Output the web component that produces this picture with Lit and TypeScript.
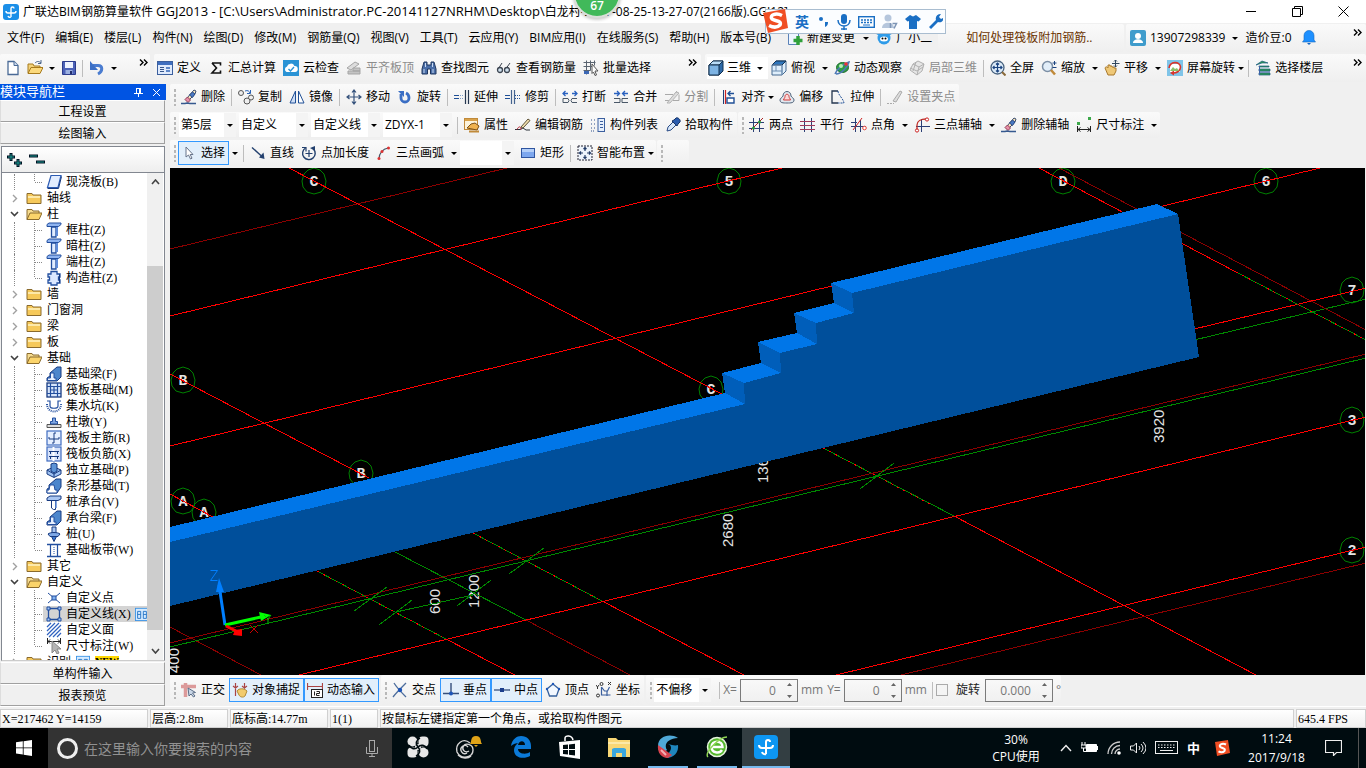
import { LitElement, html, svg, css, nothing } from "lit";
import { customElement } from "lit/decorators.js";
import { classMap } from "lit/directives/class-map.js";

const B = "#1f4f96";

/* 16x16 toolbar glyphs */
const ICONS: Record<string, unknown> = {
  app: svg`<rect width="16" height="16" rx="3" fill="#1b8fe8"/><path d="M8 13V4.500a1.500 1.500 0 0 1 3 0M8 13a2 2 0 0 1-3-1M3 7a2 2 0 0 0 2 2h6a2 2 0 0 0 2-2" fill="none" stroke="#fff" stroke-width="1.400"/>`,
  file: svg`<path d="M3 1.500h6l4 4v9H3z" fill="#fff" stroke="#4a6a96" stroke-width="1.300"/><path d="M9 1.500v4h4" fill="#cfdcf0" stroke="#4a6a96"/>`,
  open: svg`<path d="M1 13V4h5l1 2h6v2" fill="#f3d27a" stroke="#a77a1c"/><path d="M1 13.500 4 7.500h12l-3 6z" fill="#fbd97c" stroke="#a77a1c"/><path d="M8 3c2-2 4-2 6 0M14 0v3.500h-3" fill="none" stroke="#49648a"/>`,
  save: svg`<path d="M1.500 1.500h13v13h-13z" fill="#4c62b8" stroke="#2c3c8c"/><path d="M4 2h8v6H4z" fill="#eef3ff"/><path d="M4.500 10h7v4h-7z" fill="#9bb0e0"/><path d="M9 11h2v3H9z" fill="#24306e"/>`,
  undo: svg`<path d="M4 5.500h5c5 0 5 6 0 8.500" fill="none" stroke="#4a7cd0" stroke-width="3"/><path d="M1 1v9h8z" fill="#3c6fc6"/>`,
  define: svg`<rect x=".5" y="1.500" width="15" height="13" fill="#dfeafc" stroke="#3b5f9e"/><path d="M1 2h14v3H1z" fill="#3f6fc0"/><path d="M3 7.500h4M3 9.500h4M3 11.500h4" stroke="#35568c"/><path d="M9 7h4v2H9zM9 10h4v2H9z" fill="#5d86c8"/>`,
  sigma: svg`<path d="M4 3h8.500v2.500M12.500 10.500V13H4l4.500-5L4 3" fill="none" stroke="#111" stroke-width="1.600"/>`,
  cloud: svg`<rect width="16" height="16" fill="#2a93d5"/><path d="M3.500 12a3 3 0 0 1 .5-5.500A4 4 0 0 1 11.500 6a3 3 0 0 1 .5 6z" fill="#fff"/><path d="m5.500 9 2 2 3.500-4" stroke="#2a93d5" fill="none" stroke-width="1.400"/>`,
  aligntop: svg`<path d="m1 8 8-6 4 2-8 6z" fill="#ddd" stroke="#a5a5a5"/><path d="M2 11h12v3H2zM7 8h7v3H7z" fill="#c4c4c4" stroke="#a5a5a5"/>`,
  binoc: svg`<path d="M3 2h3v3h4V2h3l2 7v5H9.500V9h-3v5H1V9z" fill="#4a6ea8" stroke="#1f365f"/><path d="M3 9v4M12 9v4M4.500 3v4M11.500 3v4" stroke="#c9daf2"/>`,
  glasses: svg`<path d="M1.500 10 6 3M9 10l5-7" stroke="#3c4450" fill="none"/><circle cx="4" cy="10" r="2.500" fill="#cfe0ee" stroke="#3c4450" stroke-width="1.300"/><circle cx="11" cy="10" r="2.500" fill="#cfe0ee" stroke="#3c4450" stroke-width="1.300"/>`,
  batch: svg`<path d="M.5 2.500h12M.5 6.500h9M3.500.5v14M7.500.5v10M11.500.5v5M.5 10.500h7" stroke="#5a6470" fill="none"/><path d="M1 11h5v3H1z" fill="#3c67b4"/><path d="m9 4 6 7h-3l1.500 4-1.500.5L10.500 12 9 13.500z" fill="#fff" stroke="#555"/>`,
  cube: svg`<path d="m1 5 4-4h10v10l-4 4H1z" fill="#2f6aa8" stroke="#12304f"/><path d="m1 5 4-4h10l-4 4z" fill="#b9dcf7" stroke="#12304f"/><path d="M1 5h10v10H1z" fill="#7db3e3" stroke="#12304f"/>`,
  cubetop: svg`<path d="m1 5 4-4h10v10l-4 4H1z" fill="#dfeefb" stroke="#44688f"/><path d="m1 5 4-4h10l-4 4z" fill="#2f76bd" stroke="#12304f"/><path d="M1 5h10v10M11 5v10M5 5v6H1m4 0h6" fill="none" stroke="#6c8db1"/>`,
  orbit: svg`<ellipse cx="8.500" cy="7.500" rx="6" ry="5" fill="#2f9e44" stroke="#1b6b2b"/><path d="M1 14C3 9 9 4 15 2c-1 5-8 12-13 12" fill="none" stroke="#4d79b5" stroke-width="1.500"/><circle cx="12" cy="4" r="1.800" fill="#e33"/><circle cx="7" cy="6" r="2" fill="#b8f0b0"/>`,
  part3d: svg`<path d="m1 10 3-6 5-3 6 3-2 7-5 4z" fill="#e6e6e6" stroke="#b0b0b0"/><path d="m4 4 6 3 5-3M10 7l-2 8M1 8l7 3 6-4M7 2l-3 9" fill="none" stroke="#b0b0b0"/>`,
  full: svg`<circle cx="7.500" cy="7.500" r="6.500" fill="#dcebf8" stroke="#47617e" stroke-width="1.300"/><path d="m12 12 3.500 3.500" stroke="#8a6a3a" stroke-width="2"/><path d="M7.500 3v9M3 7.500h9M6 4.500 7.500 3 9 4.500M6 10.500 7.500 12 9 10.500M4.500 6 3 7.500 4.500 9M10.500 6 12 7.500 10.500 9" stroke="#1c4480" fill="none" stroke-width="1.200"/>`,
  zoom: svg`<circle cx="6.500" cy="6.500" r="5" fill="#e2eef9" stroke="#7c8fa5" stroke-width="1.500"/><path d="m10 10 4 4.500" stroke="#c08a3a" stroke-width="2.500"/><path d="M13.500 1v4M11.500 3h4M11.500 7.500h4" stroke="#1c4480"/>`,
  pan: svg`<path d="M1 8c1-2 2-1 3 0V5h2v1h2v1h2v1h2v3l-2 4H4z" fill="#efc877" stroke="#a9792c"/><path d="M11.500 0v7M8 3.500h7.500" stroke="#31475e"/><path d="m10 1.500 1.500-1.500L13 1.500M10 5.500 11.500 7 13 5.500" stroke="#31475e" fill="none"/>`,
  rotscr: svg`<rect width="16" height="16" fill="#7fc4e8"/><rect x="3" y="4" width="10" height="8" fill="#fff"/><path d="M2 8C3 1 13 1 13.500 7c0 4-4 6-7 6" fill="none" stroke="#d9342b" stroke-width="1.600"/><path d="m3 13 4-2.500v5z" fill="#d9342b"/><path d="m3 11 3-4 2 2 2-1 2 3z" fill="#8bc06a"/>`,
  floors: svg`<path d="m1 5 6-4 6 2H7zM4 6h10v1H4zM4 9h11v2H4zM4 13h11v2H4z" fill="#2d9b52" stroke="#1c5c80" stroke-width=".7"/><path d="M4.500 6v9M4 12h11" stroke="#3a63a6"/>`,
  erase: svg`<path d="m6 9 7-8 2 1-1 3-6 6z" fill="#fbe9c0" stroke="#3c4e6e"/><path d="m8.500 6 3 2.500L14 5l-2.500-2z" fill="#4a79c4" stroke="#2c4a80"/><path d="m4 10.500 3 3 2.500-2.500-3-3z" fill="#e88fa8" stroke="#8c3a50"/><path d="M0 14.500h4l2-.5 3 .5h6" stroke="#35598f" fill="none" stroke-width="1.600"/>`,
  copy: svg`<circle cx="3" cy="4" r="2.500" fill="#eee" stroke="#555"/><circle cx="9" cy="12" r="3" fill="#eee" stroke="#555"/><circle cx="13" cy="8.500" r="2.500" fill="#eee" stroke="#555"/><path d="M7 2c3-1 4 0 5 2M12.500 1v3.500H9" fill="none" stroke="#2b63b5"/>`,
  mirror: svg`<path d="M6.500 2v12H1z" fill="#cfdef5" stroke="${B}"/><path d="M9.500 2v12H15z" fill="#fff" stroke="${B}"/>`,
  move: svg`<path d="M8 1v14M1 8h14M6 3.500 8 1l2 2.500M6 12.500 8 15l2-2.500M3.500 6 1 8l2.500 2M12.500 6 15 8l-2.500 2" fill="none" stroke="#35527c" stroke-width="1.200"/>`,
  rotate: svg`<path d="M4 5v4a4 4 0 0 0 8 0c0-2-1-4-3-5" fill="none" stroke="#3a6ec4" stroke-width="2.800"/><path d="M1 2h6v6z" fill="#3a6ec4"/>`,
  extend: svg`<path d="M0 6.500h5M0 9.500h5" stroke="${B}" stroke-width="1.200"/><path d="M6 6.500h4M6 9.500h4" stroke="#7d9cc8" stroke-dasharray="1 1"/><path d="M11.500 1v14M14.500 1v14" stroke="#24364f" stroke-width="1.200"/>`,
  trim: svg`<path d="M0 6.500h5M0 9.500h5" stroke="${B}" stroke-width="1.200"/><path d="M6.500 1v14M9.500 1v14" stroke="#44638f" stroke-width="1.200"/><path d="M10 6.500h5M10 9.500h5" stroke="${B}" stroke-dasharray="1 1"/>`,
  brk: svg`<path d="M1 4.500h5M10 4.500h5M3.500 2 1 4.500 3.500 7M12.500 2 15 4.500 12.500 7" fill="none" stroke="#2a62c0" stroke-width="1.300"/><path d="M1 9.500h5l1 2-1 2H1zM15 9.500h-5l-1 2 1 2h5" fill="none" stroke="#4a5868"/>`,
  join: svg`<path d="M1 4.500h5M10 4.500h5M4 2l2.500 2.500L4 7M12 2 9.500 4.500 12 7" fill="none" stroke="#2a62c0" stroke-width="1.300"/><path d="M1 9.500h6v4H1M15 9.500H9v4h6" fill="none" stroke="#4a5868"/>`,
  split: svg`<path d="M1 5.500h8M1 11.500h6M9 11.500h6v-6M4 14l9-12" fill="none" stroke="#a9a9a9"/><path d="m3 14 9-11 3 1-9 10z" fill="#ddd" stroke="#b4b4b4"/>`,
  align: svg`<path d="M4.500 1v14" stroke="#c22" stroke-width="1.200"/><path d="M2.500 1v14" stroke="#1f3f78"/><path d="M6 9h7v5H6z" fill="#fff" stroke="${B}" stroke-width="1.400"/><path d="M13 4.500H7M9.500 2 7 4.500 9.500 7" fill="none" stroke="${B}" stroke-width="1.400"/>`,
  offset: svg`<path d="M1 11c0-2 2-2 3-4 0-6 8-6 8 0 1 2 3 2 3 4 0 3-3 3-7 3s-7 0-7-3z" fill="#e2e8ef" stroke="#50647c"/><path d="M4.500 11C5 9 6 9 6 7.500c0-3 4-3 4 0C10 9 11 9 11.500 11z" fill="#fbd8d8" stroke="#d03a3a"/>`,
  stretch: svg`<path d="M8 2H2v12h6" fill="none" stroke="#24364f" stroke-width="1.300"/><path d="M8 2c0 4 5 7 6 12H8" fill="none" stroke="${B}" stroke-dasharray="2 1"/>`,
  grip: svg`<path d="M0 14.500h7" stroke="#aaa" stroke-dasharray="2 1"/><path d="m6 12 7-10 2 1-6 10z" fill="#ddd" stroke="#aaa"/>`,
  prop: svg`<rect x=".5" y="1.500" width="13" height="11" fill="#fdf4dc" stroke="#c08a3a"/><path d="M1 2h12v2H1z" fill="#d9a24a"/><path d="m3 11 4-4 4-1 4 3-2 4-5-1z" fill="#f0b24e" stroke="#7c5217"/><path d="M5 14.500h10" stroke="#c08a3a" stroke-width="2"/>`,
  edit: svg`<path d="M0 12.500h5l3-1.500 3 2h4" stroke="#2a3038" fill="none"/><path d="m6 10 7-8 2 1.500L8 11z" fill="#f2dfae" stroke="#5d5238"/><path d="M2 12.500c2-4 4-3 4 0" stroke="#b23" fill="none"/>`,
  list: svg`<path d="M1 3h2M1 7h2M1 11h2M4 3h2M4 7h2M4 11h2M1 14h4" stroke="#2d4f8b" stroke-dasharray="1 1"/><rect x="8" y="1.500" width="6.500" height="13" fill="#e6effc" stroke="#3b5f9e"/><path d="M10 4.500h3M10 7.500h3M10 10.500h3" stroke="#3b5f9e"/>`,
  pick: svg`<path d="m2 14 1-4 5-5 3 3-5 5z" fill="#d8e8fa" stroke="#2a4b86"/><path d="m7 4 5 5 1-2 2-2c1-2-2-5-4-4L9 3z" fill="#2a5cae" stroke="#173466"/>`,
  ax2: svg`<path d="M4.500 1v14M10.500 1v14M0 5.500h15M0 11.500h15" stroke="#2b3f75"/><path d="m2 13 12-12" stroke="#a22"/><circle cx="10.500" cy="5" r="1.500" fill="#2a9b3c"/><circle cx="4.500" cy="11" r="1.500" fill="#2a9b3c"/>`,
  axp: svg`<path d="M4.500 1v14M11.500 1v14" stroke="#2b3f75"/><path d="M0 4.500h15M0 8.500h15M0 12.500h15" stroke="#a13a5a"/>`,
  axa: svg`<path d="M4.500 1v14M0 9.500h15M9.500 3v12M0 5.500h6" stroke="#2b3f75"/><path d="m2 13 9-12" stroke="#c22"/><circle cx="13.500" cy="11" r="1.800" fill="#fff" stroke="#e8463c"/>`,
  ax3: svg`<path d="M7.500 2v13M2 9.500h14" stroke="#2b3f75"/><path d="M3 14V8c0-4 4-6 9-6" fill="none" stroke="#c2302a" stroke-width="1.300"/><circle cx="3" cy="13.500" r="1.600" fill="#fff" stroke="#c22"/><circle cx="13" cy="2.500" r="1.600" fill="#fff" stroke="#c22"/>`,
  dim: svg`<path d="M1.500 9v6M14.500 9v6M2 12.500h12M4.500 10.500 2 12.500l2.500 2M11.500 10.500l2.500 2-2.500 2" stroke="#222" fill="none"/><path d="M1 5h3v3H1zM12 0h3v3h-3z" fill="#3ca84a"/>`,
  cursor: svg`<path d="M5 2v10l2.500-2 2 4 1.500-.800L9.200 9.500H12z" fill="#fff" stroke="#66738a"/>`,
  line: svg`<path d="M2 2.500 12 11.500" stroke="#23406e" stroke-width="1.400"/><path d="M14.500 14 9 12.500l4.500-5z" fill="#23406e"/>`,
  ptlen: svg`<path d="M4.500 3a6.300 6.300 0 1 0 8 1" fill="none" stroke="#23406e" stroke-width="1.400"/><path d="M8 5v7M4.500 8.500h7M1 2.500h4v4" fill="none" stroke="#23406e" stroke-width="1.200"/><path d="m9 3 5-2v5z" fill="#23406e"/>`,
  arc3: svg`<path d="M3 14C3 8 7 4 12 3" fill="none" stroke="#4a5868" stroke-width="1.200"/><circle cx="3" cy="13.500" r="1.500" fill="#d33"/><circle cx="6" cy="6.500" r="1.500" fill="#d33"/><circle cx="12.500" cy="3" r="1.500" fill="#d33"/>`,
  rect: svg`<rect x="1.500" y="3.500" width="13" height="9" fill="#7da7ee" stroke="#2f55a0"/><path d="M2 4h12v3H2z" fill="#b4cff8"/>`,
  smart: svg`<rect x="1" y="1" width="14" height="14" fill="#eef4fb" stroke="#223" stroke-dasharray="2 1"/><path d="M8 2v4M6.500 4 8 2.500 9.500 4M8 10v4M6.500 12 8 13.500 9.500 12M2 8h4M4 6.500 2.500 8 4 9.500M10 8h4M12 6.500 13.500 8 12 9.500" stroke="#223b66" fill="none" stroke-width="1.200"/>`,
  ortho: svg`<path d="M4.500 1v14M0 4.500h15" stroke="#dc9a9a" stroke-width="3.500"/><path d="m7 6 1 8 2-2 2.500 3 1.500-1-2.500-3 3-.500z" fill="#c9d6e6" stroke="#5b6d86"/>`,
  snap: svg`<path d="M3.500 1v13M12.500 1v8M1 4l2.500 2L6 4M10 4l2.500 2L15 4" fill="none" stroke="#a44" stroke-width="1.200"/><path d="M5 9c2-3 7-3 10 0l-2 5c-2 2-5 1-6-1z" fill="#f2cb6c" stroke="#b08a35"/>`,
  dyn: svg`<path d="M.5 1v7M15.500 1v7M1 4.500h14" stroke="#a44" stroke-width="1.200"/><rect x="4.500" y="7.500" width="11" height="8" fill="#fff" stroke="#222"/><path d="M7.500 9.500v4M9.500 9.500h3v2h-3v2h3" stroke="#222" fill="none"/>`,
  xpt: svg`<path d="M2 1c3 5 8 10 12 14M14 1C10 5 4 11 1 15" stroke="#4d6d9c" stroke-width="1.300" fill="none"/><circle cx="8" cy="8" r="2.200" fill="#1d55b8"/>`,
  perp: svg`<path d="M8 1v10M0 11.500h16" stroke="#36507c" stroke-width="1.400"/><circle cx="8" cy="11.500" r="2" fill="#1d55b8"/>`,
  mid: svg`<path d="M0 8h16" stroke="#36507c" stroke-width="1.300"/><rect x="6" y="6" width="4" height="4" fill="#1d3f8c"/>`,
  vertex: svg`<path d="M8 2 2 7l2.500 7h7L14 7z" fill="#f3f8ff" stroke="#36609c" stroke-width="1.300"/><circle cx="8" cy="2" r="1.200" fill="#1d55b8"/><circle cx="2" cy="7" r="1.200" fill="#1d55b8"/><circle cx="14" cy="7" r="1.200" fill="#1d55b8"/>`,
  coord: svg`<path d="M5.500 5v8h9M5.500 5l3 4 3 0 2-4M11 9v5" fill="none" stroke="#3b5f9e" stroke-width="1.200"/><path d="M0 3l1.500 2L3 3M1.500 5v2M12 0l3 3M15 0l-3 3" stroke="#333" fill="none"/><circle cx="2" cy="13.500" r="1.500" fill="none" stroke="#333"/><circle cx="5.500" cy="2" r="1.500" fill="none" stroke="#333"/>`,
  change: svg`<path d="M1.500 1.500h10v13h-10z" fill="#eef5ff" stroke="#5a82b8"/><path d="M11 6v9M6.500 10.500h9" stroke="#2fa03a" stroke-width="3.500"/>`,
  mascot: svg`<circle cx="8" cy="8" r="6.500" fill="#2f9be8"/><path d="M1 3l4 1M15 3l-4 1" stroke="#2f9be8" stroke-width="3"/><ellipse cx="8" cy="9" rx="4" ry="2.500" fill="#fff"/><circle cx="6.500" cy="8.500" r="1"/><circle cx="9.500" cy="8.500" r="1"/>`,
  user: svg`<rect width="16" height="16" rx="2" fill="#3f9ccc"/><circle cx="8" cy="6" r="3" fill="#fff"/><path d="M3 13c0-5 10-5 10 0z" fill="#fff"/>`,
  bell: svg`<path d="M3 10V5.500a5 5 0 0 1 10 0V10l1.500 2h-13z" fill="#1e90ff" stroke="#1669c0" stroke-width=".6"/><path d="M6 13h4l-2 2z" fill="#1565c0"/>`,
  /* tree glyphs */
  folder: svg`<path d="M1 13.500V3.500h5l1 1.500h8v8.500z" fill="#f6c95a" stroke="#8a6a2c"/><path d="M2 6h12v2H2z" fill="#fde9a9"/>`,
  folderopen: svg`<path d="M1 13.500V3.500h5l1 1.500h6v2" fill="#f6dc90" stroke="#8a6a2c"/><path d="M1 13.500 4 7h12l-3 6.500z" fill="#fbd46b" stroke="#8a6a2c"/>`,
  slab: svg`<path d="M5 1.500h10l-3 12H1.500z" fill="#e2edff" stroke="#2c5cb4" stroke-width="1.200"/><path d="M1.500 14.500h11l3-12" fill="none" stroke="#173a80"/>`,
  tcol: svg`<path d="M1 4.500V2.500l2-1.500h12v1.500L12.500 4.500z" fill="#8fb4f0" stroke="#234f9f"/><path d="M5.500 5h4.500v10H5.500z" fill="#e2edff" stroke="#234f9f" stroke-width="1.300"/><path d="M11 5v9" stroke="#5f8bd8" stroke-width="2"/>`,
  xcol: svg`<path d="M5 1.500h6V4h3v3h-1.500v3H14v3h-3v2H5v-2H2v-3h1.500V7H2V4h3z" fill="#dbe8ff" stroke="#234f9f" stroke-width="1.300"/><path d="M13.500 4v9" stroke="#173a80"/>`,
  beam: svg`<path d="M1 15v-3l3-2V7l7-6h4v10l-4 4z" fill="#4c86cc" stroke="#173a80"/><path d="M1.500 14.500V12h3V7h3.500v5h2v2.500z" fill="#e8f1ff" stroke="#234f9f"/>`,
  raft: svg`<rect x="1" y="1" width="14" height="14" fill="#d6e5fb" stroke="#173a80" stroke-width="1.300"/><path d="M4.500 1v14M11.500 1v14M1 4.500h14M1 11.500h14M8 5v6M5 8h6" stroke="#234f9f" stroke-width="1.200"/>`,
  pit: svg`<path d="M1 3h3v5c0 3 8 3 8 0V3h3" fill="none" stroke="#234f9f" stroke-width="1.200"/><path d="M1 6c0 10 14 10 14 0" fill="none" stroke="#234f9f" stroke-dasharray="1 1" stroke-width="2"/>`,
  pier: svg`<path d="M1 10.500h14v3H1z" fill="#ddd" stroke="#555"/><path d="M4.500 10V7.500h2V4h3v3.500h2V10z" fill="#7fa6e2" stroke="#234f9f"/>`,
  rebar1: svg`<rect x="1" y="1" width="14" height="14" fill="#e6efff" stroke="#3f6cc0" stroke-width="1.200"/><path d="M8 3v10M3 9h10M8 3h2M8 13H6M13 9V7M3 9V7" stroke="#173a80" fill="none"/>`,
  rebar2: svg`<rect x="1" y="1" width="14" height="14" fill="#d6e2fa" stroke="#3f6cc0" stroke-width="1.200"/><path d="M7.500 1v14" stroke="#fff" stroke-width="2"/><path d="M3 5.500h10M3 10.500h10M4.500 5v3M11.500 5v3M4.500 10v3M11.500 10v3" stroke="#173a80"/>`,
  iso: svg`<path d="m1 8 7-3 7 3v4l-7 3.500L1 12z" fill="#9fc2f2" stroke="#173a80"/><path d="M5 9V2l3-1 3 1v7l-3 2z" fill="#5c93d6" stroke="#173a80"/><path d="m1 8 7 4 7-4M8 12v3" stroke="#173a80" fill="none"/>`,
  strip: svg`<path d="M1 15v-4l2-1V7l7-6h5v8l-4 6z" fill="#4c86cc" stroke="#173a80"/><path d="M1 15v-3h2l1-5h4l1 5h2v3z" fill="#fff" stroke="#234f9f"/>`,
  cap: svg`<path d="M1 6.500V4l3-2h11v3l-3 1.500z" fill="#a9c6f2" stroke="#173a80"/><path d="M5.500 7v7l2 1.500h2V7" fill="#fff" stroke="#173a80"/><path d="M10 7v7" stroke="#5f8bd8" stroke-width="1.500"/>`,
  pile: svg`<path d="M6 1h4v6H6z" fill="#a9c6f2" stroke="#173a80"/><path d="M2 8c2-2 10-2 12 0l-2 2.500H4z" fill="#7ea8e6" stroke="#173a80"/><path d="m5.500 10.500 2.500 5 2.500-5z" fill="#3c78cf" stroke="#173a80"/>`,
  band: svg`<path d="M1 2.500h14M1 14.500h14" stroke="#234f9f" stroke-width="1.500"/><path d="M4.500 3v11M11.500 3v11" stroke="#234f9f" stroke-width="1.200"/><path d="M8 5v8" stroke="#234f9f" stroke-dasharray="1 1"/>`,
  cpoint: svg`<path d="m2 3 12 10M14 3 2 13" stroke="#234f9f"/><rect x="6" y="6" width="4" height="4" fill="#7fb0f0" stroke="#234f9f"/>`,
  cline: svg`<path d="M2.500 2.500h11v11h-11z" fill="none" stroke="#234f9f" stroke-width="1.300"/><path d="M1 1h3v3H1zM12 1h3v3h-3zM1 12h3v3H1zM12 12h3v3h-3z" fill="#9fc4f5" stroke="#234f9f"/>`,
  cface: svg`<path d="M1 5l4-4M1 9l8-8M1 13 13 1M3 15 15 3M7 15l8-8M11 15l4-4" stroke="#2f62c0" stroke-width="1.200"/>`,
  tdim: svg`<path d="M1.500 0v6M14.500 0v6M1 3.500h13M4 1.500 2 3.500l2 2M12 1.500l2 2-2 2" stroke="#222" fill="none"/><path d="m6 3 9 8h-4l2 4-2 1-2-4-3 3z" fill="#b5b5b5" stroke="#888"/>`,
  panes: svg`<rect x=".5" y="1.500" width="15" height="14" fill="#d6ebff" stroke="#3892e6"/><path d="M3 5h3.500v8H3zM9.500 5H13v8H9.500zM3 8.500h3.500M9.500 8.500H13" fill="none" stroke="#1c6fc4"/>`,
};

const ic = (n: string, s = 16) =>
  html`<svg class="ic" width=${s} height=${s} viewBox="0 0 16 16" aria-hidden="true">${ICONS[n]}</svg>`;
const more = html`<button class="more" aria-label="更多"><svg width="9" height="7" viewBox="0 0 9 7"><path d="m1 .5 3 3-3 3M5 .5l3 3-3 3" fill="none" stroke="#000" stroke-width="1.400"/></svg></button>`;
const sep = html`<span class="sep"></span>`;
const grip = html`<span class="grip"></span>`;
const dd = html`<button class="dd" aria-label="展开"><i class="tri"></i></button>`;
const btn = (icon: string, text: string, o: { on?: boolean; off?: boolean; tri?: boolean } = {}) => html`<button
    class=${classMap({ b: true, on: !!o.on })} ?disabled=${!!o.off}>${ic(icon)}<span>${text}</span>${o.tri ? html`<i class="tri near"></i>` : nothing}</button>`;
const tool = (icon: string, label: string) => html`<button class="b" aria-label=${label}>${ic(icon)}</button>`;
const combo = (label: string, value: string, cls = "") => html`<span class="combo ${cls}">
    <select aria-label=${label}><option>${value}</option></select><i class="tri"></i></span>`;

const MENUS = ["文件(F)", "编辑(E)", "楼层(L)", "构件(N)", "绘图(D)", "修改(M)", "钢筋量(Q)", "视图(V)", "工具(T)", "云应用(Y)", "BIM应用(I)", "在线服务(S)", "帮助(H)", "版本号(B)"];

type Row = { t: string; i?: string; open?: boolean; last?: boolean; sel?: boolean; tail?: boolean };
const TREE: Row[] = [
  { t: "现浇板(B)", i: "slab", last: true },
  { t: "轴线" }, { t: "柱", open: true },
  { t: "框柱(Z)", i: "tcol" }, { t: "暗柱(Z)", i: "tcol" }, { t: "端柱(Z)", i: "tcol" }, { t: "构造柱(Z)", i: "xcol", last: true },
  { t: "墙" }, { t: "门窗洞" }, { t: "梁" }, { t: "板" }, { t: "基础", open: true },
  { t: "基础梁(F)", i: "beam" }, { t: "筏板基础(M)", i: "raft" }, { t: "集水坑(K)", i: "pit" }, { t: "柱墩(Y)", i: "pier" },
  { t: "筏板主筋(R)", i: "rebar1" }, { t: "筏板负筋(X)", i: "rebar2" }, { t: "独立基础(P)", i: "iso" }, { t: "条形基础(T)", i: "strip" },
  { t: "桩承台(V)", i: "cap" }, { t: "承台梁(F)", i: "beam" }, { t: "桩(U)", i: "pile" }, { t: "基础板带(W)", i: "band", last: true },
  { t: "其它" }, { t: "自定义", open: true },
  { t: "自定义点", i: "cpoint" }, { t: "自定义线(X)", i: "cline", sel: true }, { t: "自定义面", i: "cface" }, { t: "尺寸标注(W)", i: "tdim", last: true },
  { t: "识别", tail: true },
];

/* axis grid segments: colour class, x1, y1, x2, y2 */
const LINES: [string, number, number, number, number][] = [
  ["d", 170, 249, 507, 168], ["r", 170, 316, 782, 168], ["r", 170, 446, 1320, 168],
  ["r", 289, 168, 722, 394], ["g", 823, 448, 954, 516], ["m", 823, 448, 930, 504], ["r", 954, 516, 1256, 675],
  ["r", 170, 374, 369, 478], ["g", 473, 533, 602, 601], ["m", 473, 533, 602, 601], ["r", 602, 601, 744, 675],
  ["r", 170, 494, 213, 517], ["g", 317, 571, 446, 639], ["m", 317, 571, 446, 639], ["r", 446, 639, 515, 675],
  ["g", 395, 552, 526, 620], ["d", 526, 620, 630, 675], ["d", 170, 627, 261, 675],
  ["d", 170, 643, 1366, 354], ["g", 170, 647, 1366, 358],
  ["r", 299, 675, 1366, 417], ["r", 836, 675, 1366, 547], ["d", 901, 675, 1366, 563],
  ["r", 1190, 330, 1366, 288], ["g", 1190, 341, 1366, 299],
  ["r", 1039, 168, 1236, 272], ["g", 1236, 272, 1366, 340], ["m", 1236, 272, 1366, 340], ["d", 1059, 168, 1366, 330],
  ["g", 396, 612, 473, 595], ["g", 354, 611, 387, 587], ["g", 379, 625, 412, 600], ["g", 457, 606, 491, 580],
  ["g", 509, 574, 544, 548], ["g", 860, 489, 894, 463],
];
const MARKS: [string, number, number][] = [
  ["C", 314, 181], ["5", 729, 181], ["D", 1063, 181], ["6", 1266, 181], ["7", 1352, 290], ["3", 1352, 420], ["2", 1352, 550],
  ["B", 183, 380], ["B", 361, 473], ["C", 711, 389], ["A", 183, 501], ["A", 204, 512],
];
const DIMS: [string, number, number][] = [["3920", 1164, 443], ["2680", 733, 547], ["1360", 768, 483], ["1200", 479, 608], ["600", 440, 614], ["400", 179, 673]];

@customElement("model-view")
class ModelView extends LitElement {
  static styles = css`
    :host { display: block; background: #000; overflow: hidden; }
    svg { display: block; width: 100%; height: 100%; font-family: "Liberation Sans", sans-serif; }
    .grid line { stroke-width: 1; shape-rendering: crispEdges; }
    .r { stroke: #f00; } .d { stroke: #8b0000; } .g { stroke: #080; }
    .m { stroke: #f00; stroke-dasharray: 2 5; }
    .ring { fill: none; stroke: #008000; }
    .mark { fill: #e4e4e4; font: bold 15px "Liberation Mono", monospace; text-anchor: middle; }
    .dim { fill: #e4e4e4; font-size: 15px; }
    .wall { shape-rendering: crispEdges; }
  `;
  render() {
    return html`<svg viewBox="170 168 1195 507" preserveAspectRatio="xMinYMin slice" role="img" aria-label="三维视图">
      ${MARKS.map(([t, x, y]) => svg`<polygon class="ring" transform="translate(${x} ${y})" points="0,-13 6,-11 10,-7 12,0 11,6 7,11 0,13 -7,11 -11,6 -12,0 -10,-7 -6,-11"/><text class="mark" x=${x} y=${y + 5}>${t}</text>`)}
      ${DIMS.map(([t, x, y]) => svg`<text class="dim" transform="translate(${x} ${y}) rotate(-90)">${t}</text>`)}
      <g class="grid">${LINES.map(([c, a, b, x, y]) => svg`<line class=${c} x1=${a} y1=${b} x2=${x} y2=${y}/>`)}</g>
      <g class="wall">
        <path fill="#004f9b" d="M170 542 745 404 744 383 781 373 780 353 817 344 816 323 854 313 852 293 1178 214 1199 357 170 606z"/>
        <path fill="#0076e8" d="M170 527 725 393 745 404 170 542zM722 373 761 363 781 373 744 383zM758 342 797 333 817 344 780 353zM794 313 834 303 854 313 816 323zM831 283 1157 204 1178 214 852 293z"/>
        <path fill="#005eba" d="M722 373 744 383 745 404 725 393zM758 342 780 353 781 373 761 363zM794 313 816 323 817 344 797 333zM831 283 852 293 854 313 834 303z"/>
      </g>
      <g fill="none">
        <path d="m225 625-6-40" stroke="#007fff" stroke-width="3"/><path d="m219 578 5 14h-8z" fill="#007fff"/>
        <path d="M210.500 570.500h7l-7 10h7" stroke="#007fff"/>
        <path d="m225 625 36-8" stroke="#0f0" stroke-width="3"/><path d="m271 615-12-3 2 9z" fill="#0f0"/><path d="m264 615 4 4 3-4M268 619v5" stroke="#0c0"/>
        <path d="m226 626 10 5" stroke="#f00" stroke-width="3"/><path d="m242 636-9-1 2-5 7-1z" fill="#f00"/><path d="m250 625 8 8M258 625l-8 8" stroke="#c00"/>
      </g>
    </svg>`;
  }
}

@customElement("app-root")
class AppRoot extends LitElement {
  static styles = css`
    :host { display: flex; flex-direction: column; height: 100vh; overflow: hidden; position: relative; background: #f0f0f0; color: #000;
      font: 12px/16px "Open Sans", "Noto Sans CJK SC", sans-serif; }
    * { box-sizing: border-box; }
    button, input, select { font: inherit; color: inherit; margin: 0; padding: 0; border: 0; background: none; border-radius: 0; }
    button { white-space: nowrap; flex: none; }
    svg { display: block; flex: none; }
    .song { font-family: "Liberation Serif", "Noto Sans CJK SC", serif; }

    .title { display: flex; align-items: center; height: 23px; padding-left: 3px; gap: 4px; background: #fff; flex: none; }
    .title h1 { margin: 0; font: inherit; flex: 1; white-space: nowrap; overflow: hidden; }
    .path { font-size: 13px; }
    .win { width: 46px; height: 22px; display: grid; place-items: center; }

    .bar { display: flex; align-items: stretch; flex: none; }
    .group { display: flex; align-items: center; background: linear-gradient(#fafafa, #efefef); border-radius: 2px; flex: none; }
    .menus { height: 30px; padding: 1px 0; gap: 2px; }
    .menu { display: flex; align-items: center; gap: 11px; padding: 0 11px 0 7px; flex: none; }
    .extra { display: flex; align-items: center; gap: 1px; }
    .advert { flex: 1; padding-left: 28px; color: #6b3300; }
    .advert a { color: inherit; text-decoration: none; white-space: nowrap; }
    .account { width: 240px; padding-left: 4px; gap: 4px; }
    .account .bell { margin-left: 5px; }
    .tools { height: 31px; padding: 1px 0 2px; gap: 4px; }
    .quick { width: 150px; padding-left: 2px; }
    .quick .b { padding: 0 2px; }
    .main { width: 547px; }
    .view { flex: 1; padding-left: 2px; }
    .combo3d { background: #fff; display: flex; align-items: center; height: 22px; padding-right: 2px; }
    .combo3d .b { padding-left: 0; padding-right: 2px; gap: 3px; }
    .tool { height: 28px; padding: 0 0 2px; gap: 1px; }

    .b { display: flex; align-items: center; gap: 4px; height: 24px; padding: 0 3px 0 2px; border: 1px solid transparent; }
    .b.on { background: #e2effb; border-color: #3399ff; }
    .b:disabled { color: #8c8c8c; }
    .sep { width: 6px; height: 17px; flex: none; background: linear-gradient(#bdbdbd, #bdbdbd) 2px 0 / 1px 100% no-repeat; }
    .grip { width: 8px; height: 17px; flex: none; background: repeating-linear-gradient(#b8b8b8 0 3px, transparent 3px 5px) 4px 0 / 2px 100% no-repeat; }
    .tri { display: block; flex: none; width: 0; height: 0; border: 3px solid transparent; border-top-color: #000; border-bottom: 0; }
    .tri.near { margin-right: -2px; margin-left: -1px; }
    .dd { width: 12px; height: 22px; display: grid; place-items: center; }
    .more { align-self: flex-start; margin-left: auto; width: 17px; height: 16px; display: grid; place-items: center; }
    .quick .more { width: 13px; }

    .combo { display: flex; align-items: center; width: 69px; height: 24px; margin-right: 3px; padding-right: 3px;
      background: linear-gradient(90deg, #fff calc(100% - 12px), #f4f4f4 0); flex: none; }
    .combo.floor { width: 57px; margin-left: 1px; }
    .combo.blank { width: 54px; }
    .combo.offs { width: 57px; margin: 0 6px 0 0; }
    .combo select { appearance: none; flex: 1; min-width: 0; padding-left: 2px; outline: 0; height: 22px; }

    .body { display: flex; flex: 1; min-height: 0; }
    .side { width: 166px; flex: none; display: flex; flex-direction: column; margin-right: 4px; }
    .side header { display: flex; align-items: center; height: 16px; background: #0054e3; color: #fff; padding-right: 1px; flex: none; }
    .side header h2 { margin: 0; font: inherit; font-size: 13px; flex: 1; }
    .side header button { width: 18px; height: 16px; display: grid; place-items: center; }
    .tab { height: 22px; flex: none; margin-right: 1px; padding-top: 1px; border: 1px solid #a0a0a0; border-top-color: #fff; border-left-color: #ddd; text-align: center; }
    .panel { flex: 1; min-height: 0; display: flex; flex-direction: column; margin: 2px 1px 1px 1px; border: 1px solid #828790; border-bottom-color: #ccc; background: #fff; }
    .expand { display: flex; align-items: center; gap: 6px; height: 26px; padding-left: 4px; flex: none; border-bottom: 1px solid #828790; background: linear-gradient(#fff, #eee); }
    .scroll { display: flex; flex: 1; min-height: 0; }
    .tree { list-style: none; margin: 0; padding: 1px 0 0; flex: 1; min-width: 0; overflow: hidden; height: 100%; }
    .tree li { height: 16px; display: flex; }
    .node { display: flex; align-items: center; height: 16px; line-height: 16px; width: 100%; text-align: left; }
    .top { padding-left: 8px; gap: 5px; }
    .top .twist { margin-right: 2px; }
    .leaf { margin-left: 12px; border-left: 1px dotted #888; }
    .rail { width: 28px; height: 16px; flex: none; }
    .pick { display: flex; align-items: center; gap: 4px; padding-left: 3px; }
    .pick.sel { background: #d4d4d4; }
    .new { background: #ffd800; font-weight: bold; font-size: 10px; line-height: 12px; }
    .sb { width: 16px; flex: none; background: #f0f0f0; display: flex; flex-direction: column; align-items: center; margin-right: 1px; }
    .sb button { height: 18px; width: 16px; display: grid; place-items: center; }
    .sb .gap { flex: 75; } .sb .thumb { flex: 364; width: 100%; background: #cdcdcd; } .sb .end { flex: 12; }
    .work { flex: 1; min-width: 0; display: flex; flex-direction: column; }
    model-view { flex: 1; min-height: 0; margin-right: 1px; }
    .snapbar { height: 31px; padding: 0 0 1px; gap: 2px; }
    .fld { display: flex; align-items: center; gap: 3px; color: #777; }
    .spin { display: flex; align-items: center; width: 58px; height: 23px; border: 1px solid #7a7a7a; padding-right: 4px; }
    .spin.wide { width: 68px; }
    .spin input { flex: 1; min-width: 0; text-align: right; padding-right: 10px; outline: 0; height: 18px; }
    .fld.next { margin: 0 3px 0 4px; }
    .check { display: flex; align-items: center; gap: 8px; margin-right: 5px; color: #222; }
    .check input { appearance: none; width: 12px; height: 12px; border: 1px solid #aaa; background: #f4f4f4; }
    .tailbox { width: 24px; }

    .status { display: flex; gap: 2px; height: 22px; padding-top: 2px; flex: none; border-top: 1px solid #fff; background: #f0f0f0; }
    .status span { border: 1px solid #d0d0d0; background: linear-gradient(#fff, #f0f0f0); padding-left: 1px; line-height: 18px; white-space: nowrap; overflow: hidden; }
    .s1 { width: 148px; } .s2 { width: 78px; } .s3 { width: 98px; } .s4 { width: 48px; } .s5 { flex: 1; } .s6 { width: 70px; }

    .task { display: flex; align-items: center; height: 40px; flex: none; background: #000c10; color: #fff; }
    .start { width: 48px; height: 40px; display: grid; place-items: center; background: #000; }
    .search { width: 344px; height: 40px; display: flex; align-items: center; gap: 5px; padding: 0 14px 0 8px; background: #333; flex: none; }
    .search input { flex: 1; min-width: 0; font-size: 14px; outline: 0; height: 24px; }
    .search input::placeholder { color: #919191; opacity: 1; }
    .apps { display: flex; gap: 2px; margin-left: 2px; }
    .pins { display: flex; gap: 1px; margin-left: 5px; }
    .apps button, .pins button { width: 48px; height: 40px; display: grid; place-items: center; border-bottom: 2px solid transparent; }
    .pins .run { border-bottom-color: #76b9ed; }
    .pins .act { background: #333e42; border-bottom-color: #76b9ed; }
    .pins .run { width: 40px; margin: 0 4px; }
    .tray { margin-left: auto; display: flex; align-items: center; gap: 9px; height: 40px; padding-right: 7px; }
    .cpu { width: 52px; text-align: center; margin-right: 9px; line-height: 17px; white-space: nowrap; }
    .clock { width: 63px; text-align: center; line-height: 19px; }
    .sg { width: 28px; display: grid; place-items: center; }
    .note { width: 32px; display: grid; place-items: center; }
    .edge { width: 1px; height: 40px; background: #555; }
    .zh { width: 12px; font-size: 13px; font-weight: bold; }

    .ball { position: absolute; left: 573px; top: -30px; width: 48px; height: 48px; border-radius: 50%; background: #41b95a; border: 2px solid #d9dfd9; box-shadow: 0 2px 3px #0003;
      color: #fff; font-weight: 600; text-align: center; padding-top: 26px; }
    .ime { position: absolute; left: 765px; top: 9px; width: 181px; height: 25px; background: #fbfdff; border: 1px solid #a9bdd0; display: flex; align-items: center; gap: 7px; color: #1a6fc4; font-weight: bold; font-size: 14px; padding-left: 29px; }
    .ime .logo { position: absolute; left: -4px; top: -2px; }
  `;

  private twist(o: boolean | undefined) {
    return o
      ? html`<svg class="twist" width="9" height="8"><path d="m1 2 3.500 3.500L8 2" fill="none" stroke="#404040" stroke-width="1.600"/></svg>`
      : html`<svg class="twist" width="9" height="9"><path d="m3 1 3.500 3.500L3 8" fill="none" stroke="#a0a0a0" stroke-width="1.400"/></svg>`;
  }

  private row(r: Row) {
    if (!r.i)
      return html`<li><button class="node top">${this.twist(r.open)}${ic(r.open ? "folderopen" : "folder")}<span>${r.t}</span>${r.tail ? html`${ic("panes", 14)}<span class="new">NEW</span>` : nothing}</button></li>`;
    return html`<li><button class="node leaf"><span class="rail"><svg width="28" height="16"><path d="M19.500 0v${r.last ? 8 : 16}M20 8.500h8" stroke="#888" stroke-dasharray="1 1" fill="none"/></svg></span>
      <span class=${classMap({ pick: true, sel: !!r.sel })}>${ic(r.i)}<span>${r.t}</span>${r.sel ? ic("panes", 14) : nothing}</span></button></li>`;
  }

  private spin(label: string, v: string, wide = false) {
    return html`<span class="spin ${wide ? "wide" : ""}"><input aria-label=${label} .value=${v} /><svg width="7" height="17"><path d="m1 4 2.500-3L6 4zM1 13h5l-2.500 3z" fill="#666"/></svg></span>`;
  }

  render() {
    return html`
      <header class="title">${ic("app")}
        <h1>广联达BIM钢筋算量软件 <span class="path">GGJ2013 - [C:\\Users\\Administrator.PC-20141127NRHM\\Desktop\\</span>白龙村-2017-08-25-13-27-07(2166版).GGJ12]</h1>
        <div class="bar">
          <button class="win" aria-label="最小化"><svg width="11" height="11"><path d="M0 5.500h10" stroke="#000"/></svg></button>
          <button class="win" aria-label="还原"><svg width="11" height="11"><path d="M.5 2.500h8v8h-8zM2.500 2V.5h8v8H9" fill="none" stroke="#000"/></svg></button>
          <button class="win" aria-label="关闭"><svg width="11" height="11"><path d="m.5.5 10 10M10.500.5l-10 10" stroke="#000"/></svg></button>
        </div>
      </header>

      <div class="bar menus">
        <nav class="menu">${MENUS.map((m) => html`<button>${m}</button>`)}</nav>
        <div class="extra">${btn("change", "新建变更")}${dd}${btn("mascot", "广小二")}</div>
        <div class="group advert"><a href="#">如何处理筏板附加钢筋..</a></div>
        <div class="group account">${ic("user")}<span>13907298339</span>${dd}<span>造价豆:0</span><span class="bell">${ic("bell")}</span>${more}</div>
      </div>

      <div class="bar tools">
        <div class="group quick">${tool("file", "新建")}${tool("open", "打开")}${dd}${tool("save", "保存")}${sep}${tool("undo", "撤销")}${dd}${more}</div>
        <div class="group main">${btn("define", "定义")}${btn("sigma", "汇总计算")}${btn("cloud", "云检查")}${btn("aligntop", "平齐板顶", { off: true })}${btn("binoc", "查找图元")}${btn("glasses", "查看钢筋量")}${btn("batch", "批量选择")}${more}</div>
        <div class="group view"><span class="combo3d">${btn("cube", "三维")}${dd}</span>${btn("cubetop", "俯视")}${dd}${btn("orbit", "动态观察")}${btn("part3d", "局部三维", { off: true })}${sep}${btn("full", "全屏")}${btn("zoom", "缩放")}${dd}${btn("pan", "平移")}${dd}${btn("rotscr", "屏幕旋转", { tri: true })}${sep}${btn("floors", "选择楼层")}${more}</div>
      </div>

      <div class="body">
        <aside class="side song">
          <header><h2>模块导航栏</h2>
            <button aria-label="固定"><svg width="9" height="9"><path d="M2.500 0v5M6.500 0v5M2 .5h5M0 5.500h9M4.500 5v4M5.500 0v5" stroke="#fff"/></svg></button>
            <button aria-label="关闭"><svg width="9" height="9"><path d="m1 1 7 7M8 1 1 8" stroke="#fff"/></svg></button></header>
          <button class="tab">工程设置</button>
          <button class="tab">绘图输入</button>
          <div class="panel">
            <div class="expand">
              <button aria-label="全部展开"><svg width="16" height="16"><path d="M5 1v8M1 5h8M12 7v8M8 11h8" stroke="#012" stroke-width="3"/><path d="M5 2v6M2 5h6M12 8v6M9 11h6" stroke="#1a9a90"/></svg></button>
              <button aria-label="全部折叠"><svg width="18" height="16"><path d="M1 4h9M8 10h9" stroke="#012" stroke-width="3"/><path d="M2 4h7M9 10h7" stroke="#1a9a90"/></svg></button>
            </div>
            <div class="scroll">
              <ul class="tree">${TREE.map((r) => this.row(r))}</ul>
              <div class="sb"><button aria-label="向上"><svg width="9" height="6"><path d="m1 5 3.500-4L8 5" fill="none" stroke="#444" stroke-width="1.600"/></svg></button>
                <span class="gap"></span><span class="thumb"></span><span class="end"></span>
                <button aria-label="向下"><svg width="9" height="6"><path d="m1 1 3.500 4L8 1" fill="none" stroke="#444" stroke-width="1.600"/></svg></button></div>
            </div>
          </div>
          <button class="tab">单构件输入</button>
          <button class="tab">报表预览</button>
        </aside>

        <main class="work">
          <div class="bar tool"><div class="group">${grip}${btn("erase", "删除")}${sep}${btn("copy", "复制")}${btn("mirror", "镜像")}${sep}${btn("move", "移动")}${btn("rotate", "旋转")}${sep}${btn("extend", "延伸")}${btn("trim", "修剪")}${sep}${btn("brk", "打断")}${btn("join", "合并")}${btn("split", "分割", { off: true })}${sep}${btn("align", "对齐", { tri: true })}${btn("offset", "偏移")}${btn("stretch", "拉伸")}${sep}${btn("grip", "设置夹点", { off: true })}</div></div>
          <div class="bar tool"><div class="group">${grip}${combo("楼层", "第5层", "floor")}${combo("类别", "自定义")}${combo("构件类型", "自定义线")}${combo("构件", "ZDYX-1")}${sep}${btn("prop", "属性")}${btn("edit", "编辑钢筋")}${btn("list", "构件列表")}${btn("pick", "拾取构件")}</div>
            <div class="group">${grip}${btn("ax2", "两点")}${btn("axp", "平行")}${btn("axa", "点角")}${dd}${btn("ax3", "三点辅轴")}${dd}${btn("erase", "删除辅轴")}${btn("dim", "尺寸标注")}${dd}</div></div>
          <div class="bar tool"><div class="group">${grip}${btn("cursor", "选择", { on: true })}${dd}${sep}${btn("line", "直线")}${btn("ptlen", "点加长度")}${btn("arc3", "三点画弧")}${dd}${combo("画弧方式", "", "blank")}${btn("rect", "矩形")}${sep}${btn("smart", "智能布置", { tri: true })}</div>
            <div class="group">${grip}<span class="tailbox"></span></div></div>
          <model-view></model-view>
          <div class="bar snapbar">
            <div class="group">${grip}${btn("ortho", "正交")}${btn("snap", "对象捕捉", { on: true })}${btn("dyn", "动态输入", { on: true })}</div>
            <div class="group">${grip}${btn("xpt", "交点")}${btn("perp", "垂点", { on: true })}${btn("mid", "中点", { on: true })}${btn("vertex", "顶点")}${btn("coord", "坐标")}</div>
            <div class="group">${grip}${combo("偏移方式", "不偏移", "offs")}${sep}
              <span class="fld">X=${this.spin("X 偏移", "0")}mm</span><span class="fld next">Y=${this.spin("Y 偏移", "0")}mm</span>${sep}
              <label class="check"><input type="checkbox" />旋转</label><span class="fld">${this.spin("旋转角度", "0.000", true)}°</span></div>
          </div>
        </main>
      </div>

      <footer class="status song"><span class="s1">X=217462 Y=14159</span><span class="s2">层高:2.8m</span><span class="s3">底标高:14.77m</span><span class="s4">1(1)</span><span class="s5">按鼠标左键指定第一个角点，或拾取构件图元</span><span class="s6">645.4 FPS</span></footer>

      <footer class="task">
        <button class="start" aria-label="开始"><svg width="16" height="16"><path d="M0 2.300 6.800 1.300v6.200H0zM7.600 1.200 16 0v7.500H7.600zM0 8.300h6.800v6.200L0 13.500zM7.600 8.300H16V16l-8.400-1.200z" fill="#fff"/></svg></button>
        <div class="search"><svg width="23" height="23"><circle cx="11.500" cy="11.500" r="9" fill="none" stroke="#eee" stroke-width="3"/></svg><input aria-label="搜索" placeholder="在这里输入你要搜索的内容" />
          <svg width="12" height="17"><rect x="3.500" y=".5" width="5" height="11" fill="none" stroke="#aaa"/><path d="M.5 7v6.500h11V7M6 13.500V17M3 16.500h6" fill="none" stroke="#aaa"/></svg></div>
        <div class="apps">
          <button aria-label="浏览助手"><svg width="22" height="22" viewBox="0 0 22 22"><rect x=".5" y=".5" width="10" height="10" rx="5" fill="#e8e8e8"/><rect x="11.500" y=".5" width="10" height="10" rx="4" fill="#e8e8e8"/><rect x=".5" y="11.500" width="10" height="10" rx="4" fill="#e8e8e8"/><rect x="11.500" y="11.500" width="10" height="10" rx="5" fill="#e8e8e8"/><circle cx="11" cy="11" r="3" fill="#e8e8e8"/><path d="M11 11C8 8 9 4 13 2M11 11c3-3 7-2 9 2M11 11c3 3 2 7-2 9M11 11c-3 3-7 2-9-2" fill="none" stroke="#000c10" stroke-width="1.600"/></svg></button>
          <button aria-label="通知"><svg width="28" height="26" viewBox="0 0 28 26"><path d="M16 9C9 3 1 10 3 18c4 8 16 6 16-2 0-6-8-8-10-3-1 4 3 6 6 4M14 13a4 4 0 1 0-1 6M4 21c4 4 10 4 13 1" fill="none" stroke="#d6d6d6" stroke-width="1.400"/><path d="M16 10c2-2 0-8 6-8s4 6 6 8zM20 11h4l-2 2z" fill="#e0a418"/></svg></button>
        </div>
        <div class="pins">
          <button aria-label="Edge"><svg width="22" height="22" viewBox="0 0 22 22"><path d="M1 10C2 3 7 0 11 0c6 0 10 4 10 10v3H8c0 5 8 6 12 3v4c-5 3-16 3-16-6 0-3 2-6 5-7-3 0-6 1-8 3zM8 9h7c0-5-6-5-7 0z" fill="#0b7ad8"/></svg></button>
          <button aria-label="应用商店"><svg width="22" height="24" viewBox="0 0 22 24"><path d="M0 7 21 5v19L1 21z" fill="#fff"/><path d="M6 6V3c0-3 7-3 8 2" fill="none" stroke="#fff" stroke-width="1.500"/><path d="m4 10 5-.500V14H4zM10 9.400l6-.600V14h-6zM4 15h5v4.500L4 19zM10 15h6v5.500l-6-.700z" fill="#000c10"/></svg></button>
          <button aria-label="文件资源管理器"><svg width="22" height="19" viewBox="0 0 22 19"><path d="M0 0h8l2 2h12v17H0z" fill="#f8d775"/><path d="M0 4h22v2H0z" fill="#fbe9a8"/><path d="M4 19v-8l2-1h10l2 1v8h-4v-4H8v4z" fill="#3aa6dd"/></svg></button>
          <button class="run" aria-label="广联达"><svg width="24" height="24" viewBox="0 0 24 24"><path d="M22 3C14-2 2 1 2 11c0 4 2 6 4 8l5-4c-4-6 2-12 11-12z" fill="#4fa9d8"/><path d="M12 9c3 1 4 4 2 7l-4 7c8 0 13-6 12-13-3 1-6 0-10-1z" fill="#1f86bd"/><path d="m2 10 14 10-4 3C5 23 1 17 2 10z" fill="#d8434e"/><path d="m5 15 5 5" stroke="#f5b0b4" stroke-width="2"/></svg></button>
          <button class="run" aria-label="浏览器"><svg width="24" height="24" viewBox="0 0 24 24"><circle cx="12" cy="12" r="9.500" fill="#55b82e" stroke="#e7f5df" stroke-width="1.500"/><path d="M6.500 12h11c0-7-11-7-11 0 0 6 8 7 10.500 3" fill="none" stroke="#fff" stroke-width="2.500"/><path d="M3 22C-1 18 14 2 22 2" fill="none" stroke="#8fd655" stroke-width="1.500"/></svg></button>
          <button class="act" aria-label="GGJ2013"><svg width="24" height="24" viewBox="0 0 24 24"><rect width="24" height="24" rx="4" fill="#0d96f2"/><path d="M12 19V7a2 2 0 0 1 4 0M12 19a3 3 0 0 1-4-2M5 10a3 3 0 0 0 3 3h8a3 3 0 0 0 3-3" fill="none" stroke="#fff" stroke-width="2"/></svg></button>
        </div>
        <div class="tray">
          <div class="cpu">30%<br />CPU使用</div>
          <svg width="12" height="8"><path d="m1 7 5-5.500L11 7" fill="none" stroke="#eee" stroke-width="1.400"/></svg>
          <svg width="17" height="14"><path d="M5.500 3.500h10v7h-10z" fill="#fff" stroke="#fff"/><path d="M16.500 5v4M1 1v3M4 1v3M0 4h5v3H0zM2.500 7v3.500H6" fill="none" stroke="#fff"/></svg>
          <svg width="14" height="14"><path d="M1 13A12 12 0 0 1 13 1M4.500 13A8.500 8.500 0 0 1 13 4.500M8 13a5 5 0 0 1 5-5" fill="none" stroke="#ccc" stroke-width="1.300"/><circle cx="12" cy="12" r="1.800" fill="#fff"/></svg>
          <svg width="16" height="14"><path d="M.5 5v4h3l3 3V2l-3 3zM9 5q2 2 0 4M11 3q4 4 0 8M13 1q6 6 0 12" fill="none" stroke="#eee"/></svg>
          <svg width="23" height="14"><rect x=".5" y=".5" width="22" height="12" fill="none" stroke="#eee"/><path d="M3 4h17M3 6.500h17" stroke="#eee" stroke-dasharray="1.500 1.500"/><path d="M5 9.500h13" stroke="#eee"/></svg>
          <span class="zh">中</span>
          <span class="sg"><svg width="16" height="16" viewBox="0 0 16 16"><path d="M1 2 14 0l2 13-13 3z" fill="#f04e23"/><path d="M12 4.500C8 2.500 4 5 6.500 7.200 9 8.500 12 8.500 10.500 11c-1.500 1.500-4 1.500-6 .300" fill="none" stroke="#fff" stroke-width="2"/></svg></span>
          <div class="clock">11:24<br />2017/9/18</div>
          <span class="note"><svg width="17" height="16"><path d="M.5.5h16v12h-5l-3 3v-3h-8z" fill="none" stroke="#eee" stroke-width="1.200"/></svg></span>
          <span class="edge"></span>
        </div>
      </footer>

      <div class="ball">67</div>
      <div class="ime"><svg class="logo" width="28" height="26" viewBox="0 0 28 26"><path d="m1 5 22-4 3 19-20 5z" fill="#f04e23"/><path d="M20 7.500C14 4.500 7 7 10 11c4 2.500 10 1.500 8 6-3 3-7 2.500-11 .500" fill="none" stroke="#fff" stroke-width="3.500"/></svg>
        <span>英</span>
        <svg width="14" height="16"><circle cx="5" cy="5" r="2" fill="#1a6fc4"/><path d="M9 8h3c0 3-1 4-3 5z" fill="#1a6fc4"/></svg>
        <svg width="14" height="16" viewBox="0 0 14 16"><rect x="4" y="0" width="6" height="10" rx="3" fill="#1a6fc4"/><path d="M1 6c0 8 12 8 12 0M7 12v4M4 15h6" fill="none" stroke="#1a6fc4" stroke-width="1.500"/></svg>
        <svg width="17" height="12"><rect x=".7" y=".7" width="15.600" height="10.600" fill="none" stroke="#1a6fc4" stroke-width="1.400"/><path d="M3 4h11M3 6.500h11" stroke="#1a6fc4" stroke-dasharray="2 1" stroke-width="1.400"/><path d="M5 9h7" stroke="#1a6fc4"/></svg>
        <svg width="16" height="16"><circle cx="6" cy="4" r="3.500" fill="#b5c6dc"/><path d="M0 14c0-7 12-7 12 0z" fill="#b5c6dc"/><path d="M8.500 9v5M10.500 9.500h4l-2.500 5" stroke="#7d95b5" fill="none" stroke-width="1.500"/></svg>
        <svg width="16" height="14"><path d="m5 0 3 1.500L11 0l5 4-2.500 2.500L12 6v8H4V6l-1.500.5L0 4z" fill="#1a6fc4"/></svg>
        <svg width="15" height="15"><path d="m1 13 7-7c-1-3 1-6 5-6l-2 3 2 2 2-1c1 3-2 5-5 4l-7 7z" fill="#1a6fc4"/></svg>
      </div>
    `;
  }
}
